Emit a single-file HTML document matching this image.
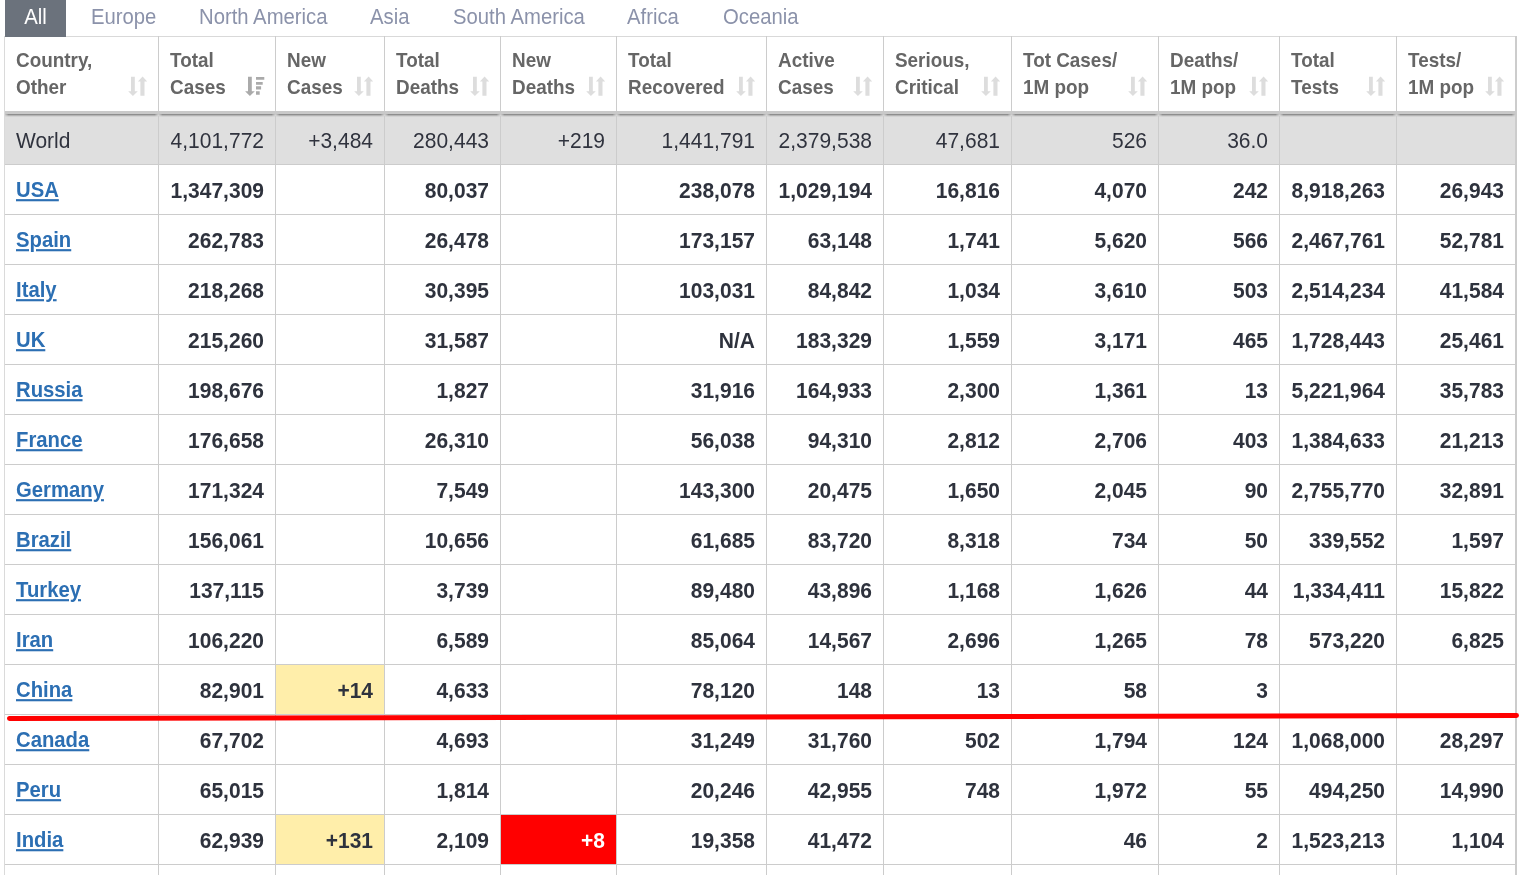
<!DOCTYPE html><html><head><meta charset="utf-8"><style>html,body{margin:0;padding:0;background:#fff;width:1532px;height:875px;overflow:hidden;position:relative;font-family:"Liberation Sans",sans-serif;}.a{position:absolute;}.l{position:absolute;background:#cccccc;}.t{position:absolute;white-space:nowrap;font-size:20.3px;line-height:24px;transform:scaleY(1.065);transform-origin:0 19px;}.h{position:absolute;white-space:nowrap;font-weight:bold;color:#666666;font-size:18.9px;line-height:27px;transform:scaleY(1.055);transform-origin:0 20px;}.c{position:absolute;white-space:nowrap;font-size:21px;line-height:50px;height:50px;text-align:right;color:#2e323d;font-weight:bold;transform:scaleY(1.04);transform-origin:0 32px;}.w{font-weight:normal;color:#30333e;}.n{position:absolute;white-space:nowrap;font-size:20.3px;line-height:50px;height:50px;font-weight:bold;color:#2c6fb3;text-decoration:underline;text-decoration-thickness:2px;text-underline-offset:2px;transform:scaleY(1.07);transform-origin:0 32px;}</style></head><body><div class="a" style="left:5px;top:0;width:61px;height:37px;background:#6b727c"></div><div class="t" style="left:5px;top:5px;width:61px;text-align:center;color:#fff">All</div><div class="t" style="left:91px;top:5px;color:#8b92aa">Europe</div><div class="t" style="left:199px;top:5px;color:#8b92aa">North America</div><div class="t" style="left:370px;top:5px;color:#8b92aa">Asia</div><div class="t" style="left:453px;top:5px;color:#8b92aa">South America</div><div class="t" style="left:627px;top:5px;color:#8b92aa">Africa</div><div class="t" style="left:723px;top:5px;color:#8b92aa">Oceania</div><div class="a" style="left:5px;top:116px;width:1510px;height:48px;background:#dfdfdf"></div><div class="a" style="left:276px;top:665px;width:108px;height:49px;background:#ffeeaa"></div><div class="a" style="left:276px;top:815px;width:108px;height:49px;background:#ffeeaa"></div><div class="a" style="left:501px;top:815px;width:115px;height:49px;background:#ff0000"></div><div class="a" style="left:5px;top:116px;width:1510px;height:1px;background:#d9d9d9"></div><div class="l" style="left:66px;top:36px;width:1451px;height:1px;background:#d9d9d9"></div><div class="l" style="left:4px;top:36px;width:1px;height:839px;background:#dadada"></div><div class="l" style="left:158px;top:36px;width:1px;height:839px"></div><div class="l" style="left:275px;top:36px;width:1px;height:839px"></div><div class="l" style="left:384px;top:36px;width:1px;height:839px"></div><div class="l" style="left:500px;top:36px;width:1px;height:839px"></div><div class="l" style="left:616px;top:36px;width:1px;height:839px"></div><div class="l" style="left:766px;top:36px;width:1px;height:839px"></div><div class="l" style="left:883px;top:36px;width:1px;height:839px"></div><div class="l" style="left:1011px;top:36px;width:1px;height:839px"></div><div class="l" style="left:1158px;top:36px;width:1px;height:839px"></div><div class="l" style="left:1279px;top:36px;width:1px;height:839px"></div><div class="l" style="left:1396px;top:36px;width:1px;height:839px"></div><div class="l" style="left:1515px;top:36px;width:2px;height:839px"></div><div class="l" style="left:5px;top:164px;width:1510px;height:1px"></div><div class="l" style="left:5px;top:214px;width:1510px;height:1px"></div><div class="l" style="left:5px;top:264px;width:1510px;height:1px"></div><div class="l" style="left:5px;top:314px;width:1510px;height:1px"></div><div class="l" style="left:5px;top:364px;width:1510px;height:1px"></div><div class="l" style="left:5px;top:414px;width:1510px;height:1px"></div><div class="l" style="left:5px;top:464px;width:1510px;height:1px"></div><div class="l" style="left:5px;top:514px;width:1510px;height:1px"></div><div class="l" style="left:5px;top:564px;width:1510px;height:1px"></div><div class="l" style="left:5px;top:614px;width:1510px;height:1px"></div><div class="l" style="left:5px;top:664px;width:1510px;height:1px"></div><div class="l" style="left:5px;top:714px;width:1510px;height:1px"></div><div class="l" style="left:5px;top:764px;width:1510px;height:1px"></div><div class="l" style="left:5px;top:814px;width:1510px;height:1px"></div><div class="l" style="left:5px;top:864px;width:1510px;height:1px"></div><div class="a" style="left:5px;top:111px;width:1511px;height:4px;background:#c9c9c9"></div><div class="a" style="left:5px;top:115px;width:1510px;height:1px;background:#d4d4d4"></div><div class="a" style="left:5px;top:114px;width:153px;height:3px;background:linear-gradient(#8e8e8e 0,#8e8e8e 1px,#b4b4b4 1px,#b4b4b4 2px,#d2d2d2 2px);-webkit-mask-image:linear-gradient(to right,transparent,#000 3.5px,#000 calc(100% - 3.5px),transparent)"></div><div class="a" style="left:159px;top:114px;width:116px;height:3px;background:linear-gradient(#8e8e8e 0,#8e8e8e 1px,#b4b4b4 1px,#b4b4b4 2px,#d2d2d2 2px);-webkit-mask-image:linear-gradient(to right,transparent,#000 3.5px,#000 calc(100% - 3.5px),transparent)"></div><div class="a" style="left:276px;top:114px;width:108px;height:3px;background:linear-gradient(#8e8e8e 0,#8e8e8e 1px,#b4b4b4 1px,#b4b4b4 2px,#d2d2d2 2px);-webkit-mask-image:linear-gradient(to right,transparent,#000 3.5px,#000 calc(100% - 3.5px),transparent)"></div><div class="a" style="left:385px;top:114px;width:115px;height:3px;background:linear-gradient(#8e8e8e 0,#8e8e8e 1px,#b4b4b4 1px,#b4b4b4 2px,#d2d2d2 2px);-webkit-mask-image:linear-gradient(to right,transparent,#000 3.5px,#000 calc(100% - 3.5px),transparent)"></div><div class="a" style="left:501px;top:114px;width:115px;height:3px;background:linear-gradient(#8e8e8e 0,#8e8e8e 1px,#b4b4b4 1px,#b4b4b4 2px,#d2d2d2 2px);-webkit-mask-image:linear-gradient(to right,transparent,#000 3.5px,#000 calc(100% - 3.5px),transparent)"></div><div class="a" style="left:617px;top:114px;width:149px;height:3px;background:linear-gradient(#8e8e8e 0,#8e8e8e 1px,#b4b4b4 1px,#b4b4b4 2px,#d2d2d2 2px);-webkit-mask-image:linear-gradient(to right,transparent,#000 3.5px,#000 calc(100% - 3.5px),transparent)"></div><div class="a" style="left:767px;top:114px;width:116px;height:3px;background:linear-gradient(#8e8e8e 0,#8e8e8e 1px,#b4b4b4 1px,#b4b4b4 2px,#d2d2d2 2px);-webkit-mask-image:linear-gradient(to right,transparent,#000 3.5px,#000 calc(100% - 3.5px),transparent)"></div><div class="a" style="left:884px;top:114px;width:127px;height:3px;background:linear-gradient(#8e8e8e 0,#8e8e8e 1px,#b4b4b4 1px,#b4b4b4 2px,#d2d2d2 2px);-webkit-mask-image:linear-gradient(to right,transparent,#000 3.5px,#000 calc(100% - 3.5px),transparent)"></div><div class="a" style="left:1012px;top:114px;width:146px;height:3px;background:linear-gradient(#8e8e8e 0,#8e8e8e 1px,#b4b4b4 1px,#b4b4b4 2px,#d2d2d2 2px);-webkit-mask-image:linear-gradient(to right,transparent,#000 3.5px,#000 calc(100% - 3.5px),transparent)"></div><div class="a" style="left:1159px;top:114px;width:120px;height:3px;background:linear-gradient(#8e8e8e 0,#8e8e8e 1px,#b4b4b4 1px,#b4b4b4 2px,#d2d2d2 2px);-webkit-mask-image:linear-gradient(to right,transparent,#000 3.5px,#000 calc(100% - 3.5px),transparent)"></div><div class="a" style="left:1280px;top:114px;width:116px;height:3px;background:linear-gradient(#8e8e8e 0,#8e8e8e 1px,#b4b4b4 1px,#b4b4b4 2px,#d2d2d2 2px);-webkit-mask-image:linear-gradient(to right,transparent,#000 3.5px,#000 calc(100% - 3.5px),transparent)"></div><div class="a" style="left:1397px;top:114px;width:118px;height:3px;background:linear-gradient(#8e8e8e 0,#8e8e8e 1px,#b4b4b4 1px,#b4b4b4 2px,#d2d2d2 2px);-webkit-mask-image:linear-gradient(to right,transparent,#000 3.5px,#000 calc(100% - 3.5px),transparent)"></div><div class="h" style="left:16px;top:47px">Country,</div><div class="h" style="left:16px;top:74px">Other</div><div class="h" style="left:170px;top:47px">Total</div><div class="h" style="left:170px;top:74px">Cases</div><div class="h" style="left:287px;top:47px">New</div><div class="h" style="left:287px;top:74px">Cases</div><div class="h" style="left:396px;top:47px">Total</div><div class="h" style="left:396px;top:74px">Deaths</div><div class="h" style="left:512px;top:47px">New</div><div class="h" style="left:512px;top:74px">Deaths</div><div class="h" style="left:628px;top:47px">Total</div><div class="h" style="left:628px;top:74px">Recovered</div><div class="h" style="left:778px;top:47px">Active</div><div class="h" style="left:778px;top:74px">Cases</div><div class="h" style="left:895px;top:47px">Serious,</div><div class="h" style="left:895px;top:74px">Critical</div><div class="h" style="left:1023px;top:47px">Tot Cases/</div><div class="h" style="left:1023px;top:74px">1M pop</div><div class="h" style="left:1170px;top:47px">Deaths/</div><div class="h" style="left:1170px;top:74px">1M pop</div><div class="h" style="left:1291px;top:47px">Total</div><div class="h" style="left:1291px;top:74px">Tests</div><div class="h" style="left:1408px;top:47px">Tests/</div><div class="h" style="left:1408px;top:74px">1M pop</div><svg class="a" style="left:128px;top:76px" width="20" height="21" viewBox="0 0 20 21"><path fill="#dddddd" d="M3 .8h3.8v14.4h3L4.9 20 0.2 15.2h2.8z M12.4 5.6h4.1v14.1h-4.1z M9.9 5.6L14.6 .5 19.2 5.6z"/></svg><svg class="a" style="left:245px;top:76px" width="20" height="21" viewBox="0 0 20 21"><path fill="#aaaaaa" d="M3 .8h3.8v14.4h3L4.9 20 0.1 15.2h2.9z M11 1.1h8.3v2.7H11z M11 5.9h6.7v2.9H11z M11 10.2h5.1v3.4H11z M11 15.2h3.7v3.5H11z"/></svg><svg class="a" style="left:354px;top:76px" width="20" height="21" viewBox="0 0 20 21"><path fill="#dddddd" d="M3 .8h3.8v14.4h3L4.9 20 0.2 15.2h2.8z M12.4 5.6h4.1v14.1h-4.1z M9.9 5.6L14.6 .5 19.2 5.6z"/></svg><svg class="a" style="left:470px;top:76px" width="20" height="21" viewBox="0 0 20 21"><path fill="#dddddd" d="M3 .8h3.8v14.4h3L4.9 20 0.2 15.2h2.8z M12.4 5.6h4.1v14.1h-4.1z M9.9 5.6L14.6 .5 19.2 5.6z"/></svg><svg class="a" style="left:586px;top:76px" width="20" height="21" viewBox="0 0 20 21"><path fill="#dddddd" d="M3 .8h3.8v14.4h3L4.9 20 0.2 15.2h2.8z M12.4 5.6h4.1v14.1h-4.1z M9.9 5.6L14.6 .5 19.2 5.6z"/></svg><svg class="a" style="left:736px;top:76px" width="20" height="21" viewBox="0 0 20 21"><path fill="#dddddd" d="M3 .8h3.8v14.4h3L4.9 20 0.2 15.2h2.8z M12.4 5.6h4.1v14.1h-4.1z M9.9 5.6L14.6 .5 19.2 5.6z"/></svg><svg class="a" style="left:853px;top:76px" width="20" height="21" viewBox="0 0 20 21"><path fill="#dddddd" d="M3 .8h3.8v14.4h3L4.9 20 0.2 15.2h2.8z M12.4 5.6h4.1v14.1h-4.1z M9.9 5.6L14.6 .5 19.2 5.6z"/></svg><svg class="a" style="left:981px;top:76px" width="20" height="21" viewBox="0 0 20 21"><path fill="#dddddd" d="M3 .8h3.8v14.4h3L4.9 20 0.2 15.2h2.8z M12.4 5.6h4.1v14.1h-4.1z M9.9 5.6L14.6 .5 19.2 5.6z"/></svg><svg class="a" style="left:1128px;top:76px" width="20" height="21" viewBox="0 0 20 21"><path fill="#dddddd" d="M3 .8h3.8v14.4h3L4.9 20 0.2 15.2h2.8z M12.4 5.6h4.1v14.1h-4.1z M9.9 5.6L14.6 .5 19.2 5.6z"/></svg><svg class="a" style="left:1249px;top:76px" width="20" height="21" viewBox="0 0 20 21"><path fill="#dddddd" d="M3 .8h3.8v14.4h3L4.9 20 0.2 15.2h2.8z M12.4 5.6h4.1v14.1h-4.1z M9.9 5.6L14.6 .5 19.2 5.6z"/></svg><svg class="a" style="left:1366px;top:76px" width="20" height="21" viewBox="0 0 20 21"><path fill="#dddddd" d="M3 .8h3.8v14.4h3L4.9 20 0.2 15.2h2.8z M12.4 5.6h4.1v14.1h-4.1z M9.9 5.6L14.6 .5 19.2 5.6z"/></svg><svg class="a" style="left:1485px;top:76px" width="20" height="21" viewBox="0 0 20 21"><path fill="#dddddd" d="M3 .8h3.8v14.4h3L4.9 20 0.2 15.2h2.8z M12.4 5.6h4.1v14.1h-4.1z M9.9 5.6L14.6 .5 19.2 5.6z"/></svg><div class="c w" style="left:16px;top:116px;text-align:left">World</div><div class="c w" style="left:158px;top:116px;width:106px;">4,101,772</div><div class="c w" style="left:275px;top:116px;width:98px;">+3,484</div><div class="c w" style="left:384px;top:116px;width:105px;">280,443</div><div class="c w" style="left:500px;top:116px;width:105px;">+219</div><div class="c w" style="left:616px;top:116px;width:139px;">1,441,791</div><div class="c w" style="left:766px;top:116px;width:106px;">2,379,538</div><div class="c w" style="left:883px;top:116px;width:117px;">47,681</div><div class="c w" style="left:1011px;top:116px;width:136px;">526</div><div class="c w" style="left:1158px;top:116px;width:110px;">36.0</div><div class="n" style="left:16px;top:165px">USA</div><div class="c" style="left:158px;top:166px;width:106px;">1,347,309</div><div class="c" style="left:384px;top:166px;width:105px;">80,037</div><div class="c" style="left:616px;top:166px;width:139px;">238,078</div><div class="c" style="left:766px;top:166px;width:106px;">1,029,194</div><div class="c" style="left:883px;top:166px;width:117px;">16,816</div><div class="c" style="left:1011px;top:166px;width:136px;">4,070</div><div class="c" style="left:1158px;top:166px;width:110px;">242</div><div class="c" style="left:1279px;top:166px;width:106px;">8,918,263</div><div class="c" style="left:1396px;top:166px;width:108px;">26,943</div><div class="n" style="left:16px;top:215px">Spain</div><div class="c" style="left:158px;top:216px;width:106px;">262,783</div><div class="c" style="left:384px;top:216px;width:105px;">26,478</div><div class="c" style="left:616px;top:216px;width:139px;">173,157</div><div class="c" style="left:766px;top:216px;width:106px;">63,148</div><div class="c" style="left:883px;top:216px;width:117px;">1,741</div><div class="c" style="left:1011px;top:216px;width:136px;">5,620</div><div class="c" style="left:1158px;top:216px;width:110px;">566</div><div class="c" style="left:1279px;top:216px;width:106px;">2,467,761</div><div class="c" style="left:1396px;top:216px;width:108px;">52,781</div><div class="n" style="left:16px;top:265px">Italy</div><div class="c" style="left:158px;top:266px;width:106px;">218,268</div><div class="c" style="left:384px;top:266px;width:105px;">30,395</div><div class="c" style="left:616px;top:266px;width:139px;">103,031</div><div class="c" style="left:766px;top:266px;width:106px;">84,842</div><div class="c" style="left:883px;top:266px;width:117px;">1,034</div><div class="c" style="left:1011px;top:266px;width:136px;">3,610</div><div class="c" style="left:1158px;top:266px;width:110px;">503</div><div class="c" style="left:1279px;top:266px;width:106px;">2,514,234</div><div class="c" style="left:1396px;top:266px;width:108px;">41,584</div><div class="n" style="left:16px;top:315px">UK</div><div class="c" style="left:158px;top:316px;width:106px;">215,260</div><div class="c" style="left:384px;top:316px;width:105px;">31,587</div><div class="c" style="left:616px;top:316px;width:139px;">N/A</div><div class="c" style="left:766px;top:316px;width:106px;">183,329</div><div class="c" style="left:883px;top:316px;width:117px;">1,559</div><div class="c" style="left:1011px;top:316px;width:136px;">3,171</div><div class="c" style="left:1158px;top:316px;width:110px;">465</div><div class="c" style="left:1279px;top:316px;width:106px;">1,728,443</div><div class="c" style="left:1396px;top:316px;width:108px;">25,461</div><div class="n" style="left:16px;top:365px">Russia</div><div class="c" style="left:158px;top:366px;width:106px;">198,676</div><div class="c" style="left:384px;top:366px;width:105px;">1,827</div><div class="c" style="left:616px;top:366px;width:139px;">31,916</div><div class="c" style="left:766px;top:366px;width:106px;">164,933</div><div class="c" style="left:883px;top:366px;width:117px;">2,300</div><div class="c" style="left:1011px;top:366px;width:136px;">1,361</div><div class="c" style="left:1158px;top:366px;width:110px;">13</div><div class="c" style="left:1279px;top:366px;width:106px;">5,221,964</div><div class="c" style="left:1396px;top:366px;width:108px;">35,783</div><div class="n" style="left:16px;top:415px">France</div><div class="c" style="left:158px;top:416px;width:106px;">176,658</div><div class="c" style="left:384px;top:416px;width:105px;">26,310</div><div class="c" style="left:616px;top:416px;width:139px;">56,038</div><div class="c" style="left:766px;top:416px;width:106px;">94,310</div><div class="c" style="left:883px;top:416px;width:117px;">2,812</div><div class="c" style="left:1011px;top:416px;width:136px;">2,706</div><div class="c" style="left:1158px;top:416px;width:110px;">403</div><div class="c" style="left:1279px;top:416px;width:106px;">1,384,633</div><div class="c" style="left:1396px;top:416px;width:108px;">21,213</div><div class="n" style="left:16px;top:465px">Germany</div><div class="c" style="left:158px;top:466px;width:106px;">171,324</div><div class="c" style="left:384px;top:466px;width:105px;">7,549</div><div class="c" style="left:616px;top:466px;width:139px;">143,300</div><div class="c" style="left:766px;top:466px;width:106px;">20,475</div><div class="c" style="left:883px;top:466px;width:117px;">1,650</div><div class="c" style="left:1011px;top:466px;width:136px;">2,045</div><div class="c" style="left:1158px;top:466px;width:110px;">90</div><div class="c" style="left:1279px;top:466px;width:106px;">2,755,770</div><div class="c" style="left:1396px;top:466px;width:108px;">32,891</div><div class="n" style="left:16px;top:515px">Brazil</div><div class="c" style="left:158px;top:516px;width:106px;">156,061</div><div class="c" style="left:384px;top:516px;width:105px;">10,656</div><div class="c" style="left:616px;top:516px;width:139px;">61,685</div><div class="c" style="left:766px;top:516px;width:106px;">83,720</div><div class="c" style="left:883px;top:516px;width:117px;">8,318</div><div class="c" style="left:1011px;top:516px;width:136px;">734</div><div class="c" style="left:1158px;top:516px;width:110px;">50</div><div class="c" style="left:1279px;top:516px;width:106px;">339,552</div><div class="c" style="left:1396px;top:516px;width:108px;">1,597</div><div class="n" style="left:16px;top:565px">Turkey</div><div class="c" style="left:158px;top:566px;width:106px;">137,115</div><div class="c" style="left:384px;top:566px;width:105px;">3,739</div><div class="c" style="left:616px;top:566px;width:139px;">89,480</div><div class="c" style="left:766px;top:566px;width:106px;">43,896</div><div class="c" style="left:883px;top:566px;width:117px;">1,168</div><div class="c" style="left:1011px;top:566px;width:136px;">1,626</div><div class="c" style="left:1158px;top:566px;width:110px;">44</div><div class="c" style="left:1279px;top:566px;width:106px;">1,334,411</div><div class="c" style="left:1396px;top:566px;width:108px;">15,822</div><div class="n" style="left:16px;top:615px">Iran</div><div class="c" style="left:158px;top:616px;width:106px;">106,220</div><div class="c" style="left:384px;top:616px;width:105px;">6,589</div><div class="c" style="left:616px;top:616px;width:139px;">85,064</div><div class="c" style="left:766px;top:616px;width:106px;">14,567</div><div class="c" style="left:883px;top:616px;width:117px;">2,696</div><div class="c" style="left:1011px;top:616px;width:136px;">1,265</div><div class="c" style="left:1158px;top:616px;width:110px;">78</div><div class="c" style="left:1279px;top:616px;width:106px;">573,220</div><div class="c" style="left:1396px;top:616px;width:108px;">6,825</div><div class="n" style="left:16px;top:665px">China</div><div class="c" style="left:158px;top:666px;width:106px;">82,901</div><div class="c" style="left:275px;top:666px;width:98px;">+14</div><div class="c" style="left:384px;top:666px;width:105px;">4,633</div><div class="c" style="left:616px;top:666px;width:139px;">78,120</div><div class="c" style="left:766px;top:666px;width:106px;">148</div><div class="c" style="left:883px;top:666px;width:117px;">13</div><div class="c" style="left:1011px;top:666px;width:136px;">58</div><div class="c" style="left:1158px;top:666px;width:110px;">3</div><div class="n" style="left:16px;top:715px">Canada</div><div class="c" style="left:158px;top:716px;width:106px;">67,702</div><div class="c" style="left:384px;top:716px;width:105px;">4,693</div><div class="c" style="left:616px;top:716px;width:139px;">31,249</div><div class="c" style="left:766px;top:716px;width:106px;">31,760</div><div class="c" style="left:883px;top:716px;width:117px;">502</div><div class="c" style="left:1011px;top:716px;width:136px;">1,794</div><div class="c" style="left:1158px;top:716px;width:110px;">124</div><div class="c" style="left:1279px;top:716px;width:106px;">1,068,000</div><div class="c" style="left:1396px;top:716px;width:108px;">28,297</div><div class="n" style="left:16px;top:765px">Peru</div><div class="c" style="left:158px;top:766px;width:106px;">65,015</div><div class="c" style="left:384px;top:766px;width:105px;">1,814</div><div class="c" style="left:616px;top:766px;width:139px;">20,246</div><div class="c" style="left:766px;top:766px;width:106px;">42,955</div><div class="c" style="left:883px;top:766px;width:117px;">748</div><div class="c" style="left:1011px;top:766px;width:136px;">1,972</div><div class="c" style="left:1158px;top:766px;width:110px;">55</div><div class="c" style="left:1279px;top:766px;width:106px;">494,250</div><div class="c" style="left:1396px;top:766px;width:108px;">14,990</div><div class="n" style="left:16px;top:815px">India</div><div class="c" style="left:158px;top:816px;width:106px;">62,939</div><div class="c" style="left:275px;top:816px;width:98px;">+131</div><div class="c" style="left:384px;top:816px;width:105px;">2,109</div><div class="c" style="left:500px;top:816px;width:105px;color:#fff;">+8</div><div class="c" style="left:616px;top:816px;width:139px;">19,358</div><div class="c" style="left:766px;top:816px;width:106px;">41,472</div><div class="c" style="left:1011px;top:816px;width:136px;">46</div><div class="c" style="left:1158px;top:816px;width:110px;">2</div><div class="c" style="left:1279px;top:816px;width:106px;">1,523,213</div><div class="c" style="left:1396px;top:816px;width:108px;">1,104</div><svg class="a" style="left:0;top:0" width="1532" height="875"><path d="M9.5 718.6 L1516.5 715.6" stroke="#ff0000" stroke-width="5" fill="none" stroke-linecap="round"/></svg></body></html>
